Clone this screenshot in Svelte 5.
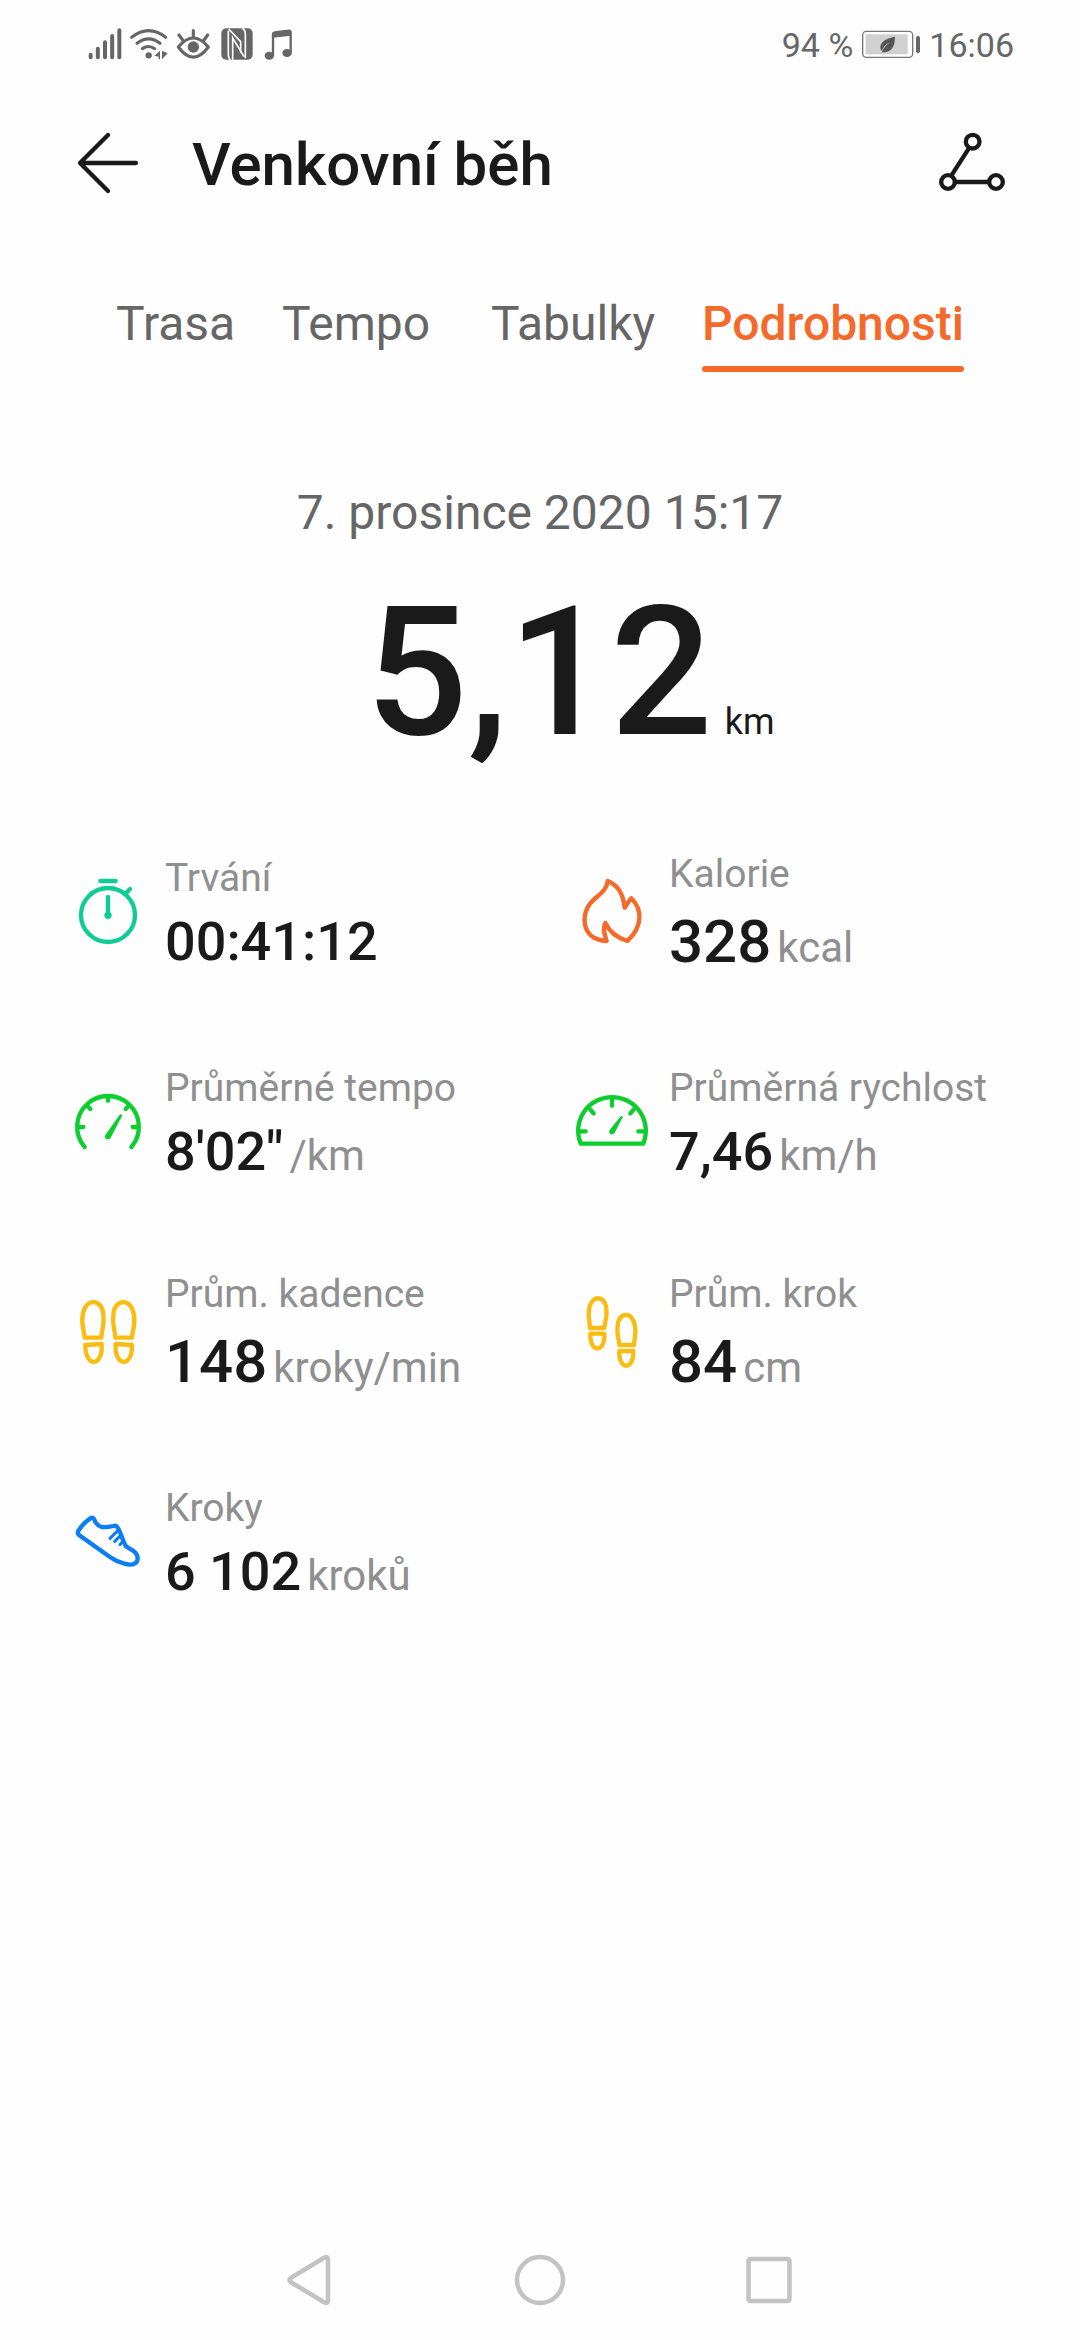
<script lang="ts">
	type Stat = {
		icon: string
		label: string
		value: string
		unit?: string
		big?: boolean
	}

	const tabs = ['Trasa', 'Tempo', 'Tabulky', 'Podrobnosti']
	let active = 'Podrobnosti'

	const stats: Stat[] = [
		{ icon: 'timer', label: 'Trvání', value: '00:41:12' },
		{ icon: 'flame', label: 'Kalorie', value: '328', unit: 'kcal', big: true },
		{ icon: 'pace', label: 'Průměrné tempo', value: `8'02"`, unit: '/km' },
		{ icon: 'speed', label: 'Průměrná rychlost', value: '7,46', unit: 'km/h' },
		{ icon: 'cadence', label: 'Prům. kadence', value: '148', unit: 'kroky/min', big: true },
		{ icon: 'stride', label: 'Prům. krok', value: '84', unit: 'cm', big: true },
		{ icon: 'shoe', label: 'Kroky', value: '6 102', unit: 'kroků' }
	]
</script>

<main>
	<div class="status">
		<div class="status-icons">
			<svg width="40" height="70" viewBox="48 0 120 210" class="line" stroke-width="12">
				<path d="M62 134v8M83.500 116v26M105 97v45M126.500 78v64M148 61v81" />
			</svg>
			<svg width="46" height="70" viewBox="168 0 138 210" class="line" stroke-width="9.500">
				<path d="M185 82Q236 42 287 82M201 100Q236 73 270 100M217 116Q236 103 254 116" />
				<circle cx="236" cy="136" r="9.500" class="solid" />
				<path d="M270 122v26h-4v-8l-13-3zM276 122v26l17-18z" class="solid" />
			</svg>
			<svg width="44" height="70" viewBox="306 0 132 210" class="line" stroke-width="9.500">
				<path d="M325 111Q370 57 415 111Q370 172 325 111zM370 62v20M327 75l11 15M413 75l-11 15" />
				<circle cx="370" cy="111" r="17" class="solid" />
			</svg>
			<svg width="42" height="70" viewBox="438 0 126 210">
				<rect x="454" y="55" width="94" height="94" rx="15" fill="#666" />
				<path d="M475 62V136Q475 144 481 150M476 57L512 95V128M488 150V84L522 140M516 55Q526 60 526 72V145" fill="none" stroke="#fefefe" stroke-width="5" />
			</svg>
			<svg width="40" height="70" viewBox="564 0 120 210" class="line" stroke-width="7">
				<path d="M609 136V73Q609 68 614 67L656 62Q662 61 662 67V128" />
				<path d="M609 67L662 61V77L609 83z" class="solid" />
				<ellipse cx="598" cy="137" rx="14" ry="12" class="solid" />
				<ellipse cx="651" cy="129" rx="14" ry="12" class="solid" />
			</svg>
		</div>
		<div class="status-right">
			<span>94 %</span>
			<svg width="62" height="70" viewBox="300 0 186 210">
				<rect x="308" y="64" width="150" height="78" rx="11" fill="#fff" stroke="#777" stroke-width="4" />
				<rect x="317" y="73" width="126" height="60" fill="#d0d0d0" />
				<rect x="468" y="78" width="12" height="51" rx="5" fill="#666" />
				<path d="M405 80Q362 89 361 111Q360 118 365 122Q376 101 391 97Q374 107 365 127Q405 129 405 80z" fill="#555" />
			</svg>
			<span>16:06</span>
		</div>
	</div>

	<header>
		<svg width="64" height="64" viewBox="0 0 64 64" fill="none" stroke="#1a1a1a" stroke-width="4.300" stroke-linecap="round" stroke-linejoin="round">
			<path d="M32 4L4 32L32 60M4 32H60" />
		</svg>
		<h1>Venkovní běh</h1>
		<svg width="72" height="64" viewBox="54 34 216 192" fill="none" stroke="#1a1a1a" stroke-width="13">
			<circle cx="158" cy="66" r="20.500" />
			<circle cx="84" cy="187" r="20.500" />
			<circle cx="228" cy="187" r="20.500" />
			<path d="M148 84L94 168M104 187H208" />
		</svg>
	</header>

	<nav class="tabs">
		{#each tabs as tab}
			<button class:active={tab === active} on:click={() => (active = tab)}>{tab}</button>
		{/each}
	</nav>

	<section class="summary">
		<p class="date">7. prosince 2020 15:17</p>
		<p class="distance">5,12<span>km</span></p>
	</section>

	<section class="stats">
		{#each stats as stat, i}
			<div class="stat {stat.icon}" class:big={stat.big}>
				<svg width="84" height="84" viewBox="{i % 2 ? 30 : 18} 57 252 252">
					{#if stat.icon === 'timer'}
						<circle cx="144" cy="195" r="81" />
						<path d="M121 93H167M199 128L210 117M144 141V195" />
						<circle cx="144" cy="196" r="11" class="fill" />
					{:else if stat.icon === 'flame'}
						<path d="M143 93C178 108 189 135 194 173C199 168 202 157 214 145C245 176 252 226 202 273C174 264 149 247 136 219C126 238 135 254 140 273C60 270 60 185 99 151C120 132 141 119 143 93z" />
					{:else if stat.icon === 'pace'}
						<path d="M74 261A92.500 92.500 0 1 1 214 261M144 110v12M85 141l6 6M203 141l-6 6M57 201h13M231 201h-13" />
						<path d="M179 164Q183 160 187 166L153 232Q147 242 137 236Q132 231 136 225z" class="fill" />
					{:else if stat.icon === 'speed'}
						<path d="M62 251A101.500 101.500 0 1 1 250 251zM156 120v17M92 150l9 10M220 150l-9 10M63 214h14M249 214h-14" />
						<path d="M182 169Q187 166 188 172L165 217Q159 227 150 221Q145 216 149 210z" class="fill" />
					{:else if stat.icon === 'cadence'}
						<path d="M74 203H124C125 179 134 167 130 132C126 87 76 81 68 135C63 165 72 177 74 203zM76 225L125 222C130 293 75 293 76 225z" />
						<path d="M216 203H166C165 179 156 167 160 132C164 87 214 81 222 135C227 165 218 177 216 203zM216 225L167 222C163 293 218 293 216 225z" />
					{:else if stat.icon === 'stride'}
						<path d="M90 174H133C134 155 143 144 139 115C135 74 93 74 87 119C83 145 90 154 90 174zM91 191H133C137 250 88 250 91 191z" />
						<path d="M222 225H178C177 205 169 196 173 166C176 124 220 124 225 169C230 196 222 205 222 225zM220 243H178C175 302 222 302 220 243z" />
					{:else}
						<path d="M56 151Q71 128 91 115Q97 111 102 117C112 144 129 145 160 138Q168 135 173 143C185 161 188 186 199 200C214 209 234 216 233 237C231 257 207 255 193 251C176 247 166 243 151 232L58 166Q50 159 56 151z" />
						<path d="M172 153l-22 22M179 169l-15 15M189 183l-9 11" stroke-width="9" />
					{/if}
				</svg>
				<div class="info">
					<div class="label">{stat.label}</div>
					<div class="value">{stat.value}{#if stat.unit}<span>{stat.unit}</span>{/if}</div>
				</div>
			</div>
		{/each}
	</section>

	<footer>
		<svg width="60" height="60" viewBox="0 0 60 60">
			<path d="M43.500 7.500Q47 6 47 10V50Q47 54 43.500 52.500L9.500 32Q7.500 30 9.500 28z" />
		</svg>
		<svg width="60" height="60" viewBox="0 0 60 60">
			<circle cx="30" cy="30" r="23" />
		</svg>
		<svg width="60" height="60" viewBox="0 0 60 60">
			<rect x="9.500" y="9" width="41" height="42" rx="2" />
		</svg>
	</footer>
</main>

<style>
	:global(body) {
		background: #fefefe;
	}
	main {
		display: flex;
		flex-direction: column;
		box-sizing: border-box;
		height: 2340px;
		padding-top: 10px;
		font-family: Roboto, sans-serif;
		color: #1a1a1a;
	}
	svg {
		display: block;
		flex: none;
	}
	h1, p {
		margin: 0;
	}

	.status {
		display: flex;
		justify-content: space-between;
		height: 70px;
		padding: 0 66px 0 86px;
		font-size: 34px;
		line-height: 70px;
		color: #666;
	}
	.status-icons, .status-right {
		display: flex;
	}
	.status-right svg {
		margin: 0 7px;
	}
	.line {
		fill: none;
		stroke: #666;
		stroke-linecap: round;
		stroke-linejoin: round;
	}
	.solid {
		fill: #666;
		stroke: none;
	}

	header {
		display: flex;
		align-items: center;
		height: 88px;
		margin-top: 40px;
		padding: 0 70px 0 76px;
		box-sizing: border-box;
	}
	header svg {
		margin-top: -2px;
	}
	h1 {
		flex: 1;
		margin: 2px 0 0 52px;
		font-size: 60px;
		font-weight: 500;
		line-height: 80px;
	}

	.tabs {
		display: flex;
		justify-content: space-between;
		margin: 86px 116px 0;
	}
	.tabs button {
		padding: 0;
		border: none;
		background: none;
		font: 400 48px/60px Roboto, sans-serif;
		color: #666;
		cursor: pointer;
	}
	.tabs button:nth-child(2) {
		margin-right: 14px;
	}
	.tabs button::after {
		content: '';
		display: block;
		height: 6px;
		margin-top: 12px;
		border-radius: 3px;
	}
	.tabs .active {
		font-weight: 500;
		color: #f36a2a;
	}
	.tabs .active::after {
		background: #f36a2a;
	}

	.summary {
		text-align: center;
		margin-top: 111px;
	}
	.date {
		font-size: 48px;
		line-height: 60px;
		color: #666;
	}
	.distance {
		margin-top: 25px;
		padding-left: 60px;
		font-size: 180px;
		font-weight: 500;
		line-height: 210px;
	}
	.distance span {
		margin-left: 12px;
		font-size: 36px;
		font-weight: 400;
		line-height: 1;
	}

	.stats {
		display: grid;
		grid-template-columns: 504px 504px;
		grid-auto-rows: 210px;
		padding-left: 66px;
		margin-top: 28px;
	}
	.stat {
		display: flex;
		gap: 15px;
	}
	.stat svg {
		margin-top: 63px;
		fill: none;
		stroke: var(--tint);
		stroke-width: 13px;
		stroke-linecap: round;
		stroke-linejoin: round;
	}
	.stat .fill {
		fill: var(--tint);
		stroke: none;
	}
	.timer { --tint: #0fcc95; }
	.flame { --tint: #f56a28; }
	.pace, .speed { --tint: #0dcd2f; }
	.cadence, .stride { --tint: #fbbc11; }
	.shoe { --tint: #0a7df7; }
	.info {
		padding-top: 49px;
		white-space: nowrap;
	}
	.label {
		font-size: 39px;
		line-height: 46px;
		color: #8f8f8f;
	}
	.value {
		margin-top: 9px;
		font-size: 54px;
		font-weight: 500;
		line-height: 64px;
	}
	.value span {
		margin-left: 6px;
		font-size: 42px;
		font-weight: 400;
		line-height: 1;
		color: #8f8f8f;
	}
	.big .info {
		padding-top: 45px;
	}
	.big .value {
		margin-top: 10px;
		font-size: 60px;
		line-height: 70px;
	}

	footer {
		display: flex;
		justify-content: center;
		gap: 169px;
		margin-top: auto;
		padding-bottom: 30px;
	}
	footer svg {
		fill: none;
		stroke: #c3c3c3;
		stroke-width: 4.5px;
	}
</style>
